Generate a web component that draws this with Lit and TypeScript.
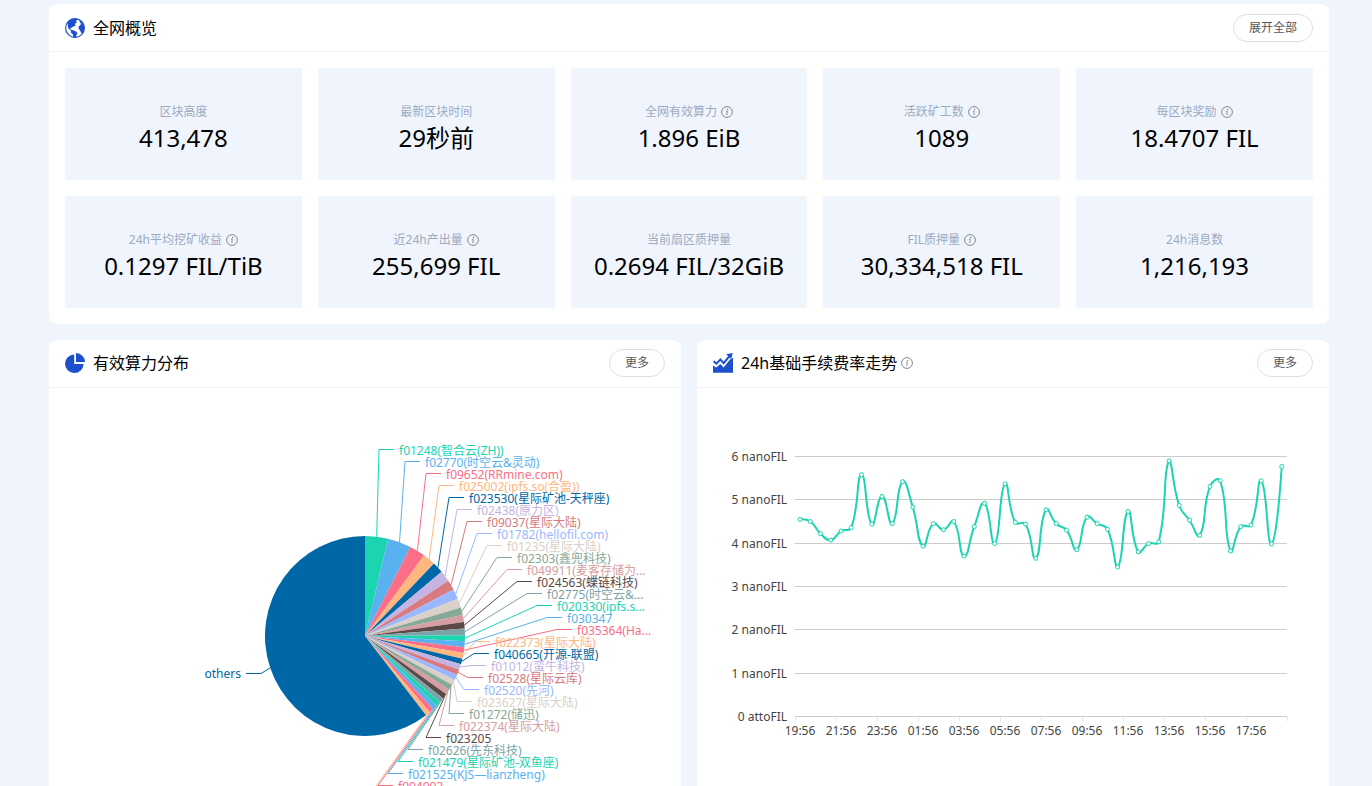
import { LitElement, html, svg, css } from "lit";
import { customElement, property } from "lit/decorators.js";

const palette = [
  "#1bd4b0", "#5ab1ef", "#fc6e87", "#ffb77f", "#0067a6", "#c4b4e4", "#d87a80",
  "#9ab8ff", "#d9d0c7", "#87a997", "#d49ea2", "#5b4947", "#7da3a8",
];

interface Stat { label: string; value: string; info?: boolean }

const stats: Stat[] = [
  { label: "区块高度", value: "413,478" },
  { label: "最新区块时间", value: "29秒前" },
  { label: "全网有效算力", value: "1.896 EiB", info: true },
  { label: "活跃矿工数", value: "1089", info: true },
  { label: "每区块奖励", value: "18.4707 FIL", info: true },
  { label: "24h平均挖矿收益", value: "0.1297 FIL/TiB", info: true },
  { label: "近24h产出量", value: "255,699 FIL", info: true },
  { label: "当前扇区质押量", value: "0.2694 FIL/32GiB" },
  { label: "FIL质押量", value: "30,334,518 FIL", info: true },
  { label: "24h消息数", value: "1,216,193" },
];

// [name, end angle in degrees, x of the leader's bend]
const miners: [string, number, number][] = [
  ["f01248(智合云(ZH))", 13.4, 330],
  ["f02770(时空云&灵动)", 27, 356],
  ["f09652(RRmine.com)", 36.2, 377],
  ["f025002(ipfs.so(合盈))", 43.6, 390],
  ["f023530(星际矿池-天秤座)", 50, 400],
  ["f02438(原力区)", 56.4, 408],
  ["f09037(星际大陆)", 62.3, 418],
  ["f01782(hellofil.com)", 68.1, 428],
  ["f01235(星际大陆)", 73.4, 438],
  ["f02303(鑫兜科技)", 77.9, 448],
  ["f049911(麦客存储为...", 81.9, 458],
  ["f024563(蝶链科技)", 85.7, 468],
  ["f02775(时空云&...", 89.5, 478],
  ["f020330(ipfs.s...", 93, 488],
  ["f030347", 96.5, 498],
  ["f035364(Ha...", 99.8, 508],
  ["f022373(星际大陆)", 103.1, 426],
  ["f040665(开源-联盟)", 106.4, 425],
  ["f01012(蛮牛科技)", 109.7, 422],
  ["f02528(星际云库)", 112.9, 419],
  ["f02520(先河)", 116.1, 415],
  ["f023627(星际大陆)", 119.3, 408],
  ["f01272(储迅)", 122.5, 400],
  ["f022374(星际大陆)", 125.6, 390],
  ["f023205", 128.6, 377],
  ["f02626(先东科技)", 131.5, 359],
  ["f021479(星际矿池-双鱼座)", 134.3, 349],
  ["f021525(KJS—lianzheng)", 137, 339],
  ["f094003", 139.7, 329],
  ["", 142.4, 319],
];

const fees = [
  4.55, 4.5, 4.22, 4.07, 4.28, 4.36, 5.58, 4.44, 5.08, 4.45, 5.42, 4.83,
  3.93, 4.45, 4.31, 4.5, 3.7, 4.38, 4.92, 3.99, 5.37, 4.48, 4.44, 3.65,
  4.77, 4.45, 4.3, 3.85, 4.6, 4.45, 4.32, 3.45, 4.73, 3.8, 3.99, 4.03,
  5.9, 4.87, 4.53, 4.18, 5.31, 5.44, 3.82, 4.38, 4.42, 5.44, 3.98, 5.77,
];

const hours = ["19:56", "21:56", "23:56", "01:56", "03:56", "05:56", "07:56", "09:56", "11:56", "13:56", "15:56", "17:56"];

@customElement("info-icon")
class InfoIcon extends LitElement {
  static styles = css`
    :host { display: inline-flex; flex: none; }
  `;
  render() {
    return html`<svg width="12" height="12" viewBox="0 0 12 12" aria-hidden="true">
      <circle cx="6" cy="6" r="5.4" fill="none" stroke="#85898f" stroke-width="1"/>
      <circle cx="6.6" cy="3.5" r=".7" fill="#85898f"/>
      <path d="M5 5.3h1.4L5.7 8.3q-.1.6.9.2" fill="none" stroke="#85898f" stroke-width=".9"/>
    </svg>`;
  }
}

@customElement("panel-card")
class PanelCard extends LitElement {
  @property() heading = "";
  @property() action = "";
  @property({ type: Boolean }) info = false;

  static styles = css`
    :host { display: block; background: #fff; border-radius: 8px; overflow: hidden; }
    .head {
      display: flex; align-items: center; box-sizing: border-box; height: 48px;
      padding: 0 16px 1px; border-bottom: 1px solid #f0f3f8;
    }
    :host([lead]) .head { padding: 1px 16px 0; }
    .icon { display: flex; margin-right: 8px; }
    h2 { margin: 0; font-size: 16px; font-weight: 400; line-height: 24px; color: #000; }
    info-icon { margin-left: 4px; }
    button {
      margin-left: auto; height: 28px; padding: 0 15px; border: 1px solid #dcdfe9;
      border-radius: 14px; background: #fff; color: #55585e; font: inherit;
      font-size: 12px; line-height: 26px; cursor: pointer;
    }
  `;
  render() {
    return html`
      <div class="head">
        <span class="icon"><slot name="icon"></slot></span>
        <h2>${this.heading}</h2>
        ${this.info ? html`<info-icon></info-icon>` : ""}
        <button type="button">${this.action}</button>
      </div>
      <slot></slot>
    `;
  }
}

@customElement("power-pie")
class PowerPie extends LitElement {
  static styles = css`
    :host { display: block; }
    svg { display: block; width: 100%; height: auto; }
    text { font-size: 12px; }
    .leader { fill: none; stroke-width: 1; }
  `;

  private at(deg: number, r = 100) {
    const a = (deg * Math.PI) / 180;
    return [316 + r * Math.sin(a), 248 - r * Math.cos(a)];
  }

  private slice(from: number, to: number, color: string) {
    const [x1, y1] = this.at(from);
    const [x2, y2] = this.at(to);
    return svg`<path fill=${color} d="M316 248L${x1} ${y1}A100 100 0 ${to - from > 180 ? 1 : 0} 1 ${x2} ${y2}Z"/>`;
  }

  render() {
    let from = 0;
    const parts = miners.map(([name, to, bend], i) => {
      const color = palette[i % palette.length];
      const [x, y] = this.at((from + to) / 2);
      const ly = 61.5 + 12 * i;
      const part = {
        slice: this.slice(from, to, color),
        label: svg`
          <polyline class="leader" stroke=${color} points="${x},${y} ${bend},${ly} ${bend + 15},${ly}"/>
          <text x=${bend + 20} y=${ly + 5} fill=${color}>${name}</text>`,
      };
      from = to;
      return part;
    });
    return html`<svg viewBox="0 0 632 448" role="img" aria-label="有效算力分布">
      ${parts.map((p) => p.slice)}
      ${this.slice(from, 360, palette[4])}
      ${parts.map((p) => p.label)}
      <polyline class="leader" stroke=${palette[4]} points="221,280 212,285.5 197,285.5"/>
      <text x="192" y="290" text-anchor="end" fill=${palette[4]}>others</text>
    </svg>`;
  }
}

@customElement("fee-chart")
class FeeChart extends LitElement {
  static styles = css`
    :host { display: block; }
    svg { display: block; width: 100%; height: auto; }
    text { font-size: 12px; fill: #444; }
    .grid { stroke: #ccc; }
    .tick { stroke: #e4e4e4; }
    .line { fill: none; stroke: #1bd4b0; stroke-width: 2; stroke-linejoin: bevel; }
    .dot { fill: #fff; stroke: #1bd4b0; }
  `;

  private curve(p: number[][]) {
    const ys = p.map((q) => q[1]);
    const lo = Math.min(...ys);
    const hi = Math.max(...ys);
    const clamp = (y: number) => Math.min(hi, Math.max(lo, y));
    let d = `M${p[0][0]} ${p[0][1]}`;
    let c0 = p[0];
    for (let i = 1; i < p.length; i++) {
      const cur = p[i];
      const prev = p[i - 1];
      const next = p[i + 1] ?? cur;
      const a = Math.hypot(cur[0] - prev[0], cur[1] - prev[1]);
      const b = Math.hypot(cur[0] - next[0], cur[1] - next[1]);
      const ratio = b / (a + b);
      const v = [next[0] - prev[0], next[1] - prev[1]];
      const last = i === p.length - 1;
      const c1 = last ? cur : [cur[0] - v[0] * 0.5 * (1 - ratio), clamp(cur[1] - v[1] * 0.5 * (1 - ratio))];
      d += `C${c0[0]} ${c0[1]} ${c1[0]} ${c1[1]} ${cur[0]} ${cur[1]}`;
      c0 = [cur[0] + v[0] * 0.5 * ratio, clamp(cur[1] + v[1] * 0.5 * ratio)];
    }
    return d;
  }

  render() {
    const points = fees.map((v, i) => [103 + i * 10.25, 328.5 - (v * 260) / 6]);
    return html`<svg viewBox="0 0 632 448" role="img" aria-label="24h基础手续费率走势">
      ${[0, 1, 2, 3, 4, 5, 6].map((v) => {
        const y = Math.floor(328.5 - (v * 260) / 6) + 0.5;
        return svg`<line class="grid" x1="98" x2="590" y1=${y} y2=${y}/>
          <text x="90" y=${y + 4.5} text-anchor="end">${v === 0 ? "0 attoFIL" : `${v} nanoFIL`}</text>`;
      })}
      ${hours.map((h, i) => svg`<line class="tick" x1=${98.5 + 41 * i} x2=${98.5 + 41 * i} y1="329" y2="333"/>
        <text x=${103 + 41 * i} y="347" text-anchor="middle">${h}</text>`)}
      <line class="tick" x1="590.5" x2="590.5" y1="329" y2="333"/>
      <path class="line" d=${this.curve(points)}/>
      ${points.map(([x, y]) => svg`<circle class="dot" cx=${x} cy=${y} r="2"/>`)}
    </svg>`;
  }
}

@customElement("app-root")
class AppRoot extends LitElement {
  static styles = css`
    :host {
      display: block; box-sizing: border-box; height: 100vh; overflow-y: auto;
      scrollbar-width: none; padding: 4px 43px 0 49px; background: #f0f5fd;
      font-family: "Noto Sans", "Noto Sans CJK SC", sans-serif; color: #000;
    }
    main { display: grid; gap: 16px; }
    .stats { display: grid; grid-template-columns: repeat(5, 1fr); gap: 16px; padding: 16px; }
    .stat {
      display: flex; flex-direction: column; align-items: center; justify-content: center;
      box-sizing: border-box; height: 112px; padding-top: 6px;
      border-radius: 2px; background: #f0f5fd;
    }
    .label {
      display: flex; align-items: center; gap: 4px; color: #9caabf;
      font-size: 12px; line-height: 22px;
    }
    .value { font-size: 24px; line-height: 30px; }
    .charts { display: grid; grid-template-columns: 1fr 1fr; gap: 16px; }
  `;

  render() {
    return html`<main>
      <panel-card lead heading="全网概览" action="展开全部">
        <svg slot="icon" width="20" height="20" viewBox="0 0 20 20" aria-hidden="true">
          <circle cx="10" cy="10" r="9.4" fill="#fff" stroke="#1c50cc" stroke-width="1.2"/>
          <path fill="#1c50cc" d="M2.6 5Q5 1 10 .6l2.6.6-1.4 1.6.6 1.6-2 1.6.8 2-2.4.4-1.6 1.4-1.4.2.6 1.6 2.2.6 3 1.4 1.6 2-1.4 1.6.2 2.6-1.6.6-1.6-1.6-.4-2.6-2-1.6.2-2-2.6-2.2-.6-2.4Z"/>
          <path fill="#1c50cc" d="M14.6 2.2q4.4 2.6 4.9 7.6-.4 4-2.4 5.8l-1-.8-1-2.2-1.6-2 .2-2.2 1.6-1.4 1-1.2-1.6-1.2Z"/>
        </svg>
        <div class="stats">
          ${stats.map((s) => html`<div class="stat">
            <div class="label"><span>${s.label}</span>${s.info ? html`<info-icon></info-icon>` : ""}</div>
            <div class="value">${s.value}</div>
          </div>`)}
        </div>
      </panel-card>
      <div class="charts">
        <panel-card heading="有效算力分布" action="更多">
          <svg slot="icon" width="20" height="20" viewBox="0 0 20 20" aria-hidden="true">
            <path fill="#1c50cc" d="M9.2 1.4V11h9.4A9.3 9.3 0 1 1 9.2 1.4Z"/>
            <path fill="#1c50cc" d="M11 0a9.2 9.2 0 0 1 9 9h-9Z"/>
          </svg>
          <power-pie></power-pie>
        </panel-card>
        <panel-card heading="24h基础手续费率走势" action="更多" info>
          <svg slot="icon" width="20" height="20" viewBox="0 0 20 20" aria-hidden="true">
            <path fill="#1c50cc" d="M0 12.4 3.2 14.6 7.4 11l3.2 3.4L17 6.6l3-1.8v15H0Z"/>
            <path fill="none" stroke="#1c50cc" stroke-width="2" d="M.6 8.2 3.4 10.6 7.4 6.4l3.2 3.8L16.6 3"/>
            <path fill="#1c50cc" d="M13.2 1.2 19.8 0l-1.6 6Z"/>
          </svg>
          <fee-chart></fee-chart>
        </panel-card>
      </div>
    </main>`;
  }
}
